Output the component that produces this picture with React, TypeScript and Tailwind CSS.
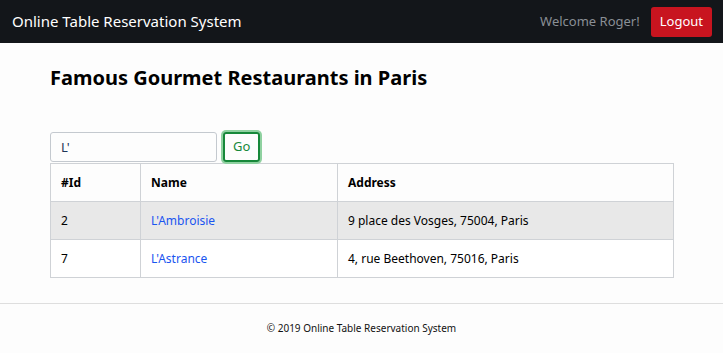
export default function App() {
  const rows = [
    { id: 2, name: "L'Ambroisie", address: "9 place des Vosges, 75004, Paris", shade: true },
    { id: 7, name: "L'Astrance", address: "4, rue Beethoven, 75016, Paris", shade: false },
  ];

  return (
    <div className="min-h-[353px] bg-[#fdfdfd] text-black" style={{ fontFamily: '"Noto Sans", "Open Sans", sans-serif' }}>
      {/* navbar */}
      <nav className="h-[43px] bg-[#13161a] flex items-center justify-between pl-[12px] pr-[11px]">
        <span className="text-white text-[15px]">Online Table Reservation System</span>
        <div className="flex items-center gap-[11px]">
          <span className="text-[#8a8f95] text-[13px]">Welcome Roger!</span>
          <button className="h-[30px] px-[9px] rounded-[3px] bg-[#c8141f] text-white text-[13px]">Logout</button>
        </div>
      </nav>

      <main className="pl-[50px] pr-[49px]">
        <h1 className="mt-[21px] text-[20px] font-bold leading-[28px]">Famous Gourmet Restaurants in Paris</h1>

        {/* search */}
        <div className="mt-[40px] flex items-center gap-[6px]">
          <input
            defaultValue="L'"
            className="w-[167px] h-[30px] border border-[#c4c9cf] rounded-[3px] px-[10px] text-[13px] text-[#1d3557] outline-none"
          />
          <button className="h-[30px] px-[8px] border-2 border-[#17883a] rounded-[3px] text-[#17883a] text-[13px] ring-[2px] ring-[#8fd1a0]">
            Go
          </button>
        </div>

        {/* table */}
        <table className="mt-[1px] w-[624px] border-collapse text-[12px]">
          <thead>
            <tr className="h-[38px]">
              <th className="w-[90px] border border-[#cfd2d6] text-left font-bold pl-[10px]">#Id</th>
              <th className="w-[197px] border border-[#cfd2d6] text-left font-bold pl-[10px]">Name</th>
              <th className="border border-[#cfd2d6] text-left font-bold pl-[10px]">Address</th>
            </tr>
          </thead>
          <tbody>
            {rows.map((r) => (
              <tr key={r.id} className={"h-[38px] " + (r.shade ? "bg-[#e8e8e8]" : "bg-white")}>
                <td className="border border-[#cfd2d6] pl-[10px]">{r.id}</td>
                <td className="border border-[#cfd2d6] pl-[10px]">
                  <a href="#" className="text-[#1a55f0]">{r.name}</a>
                </td>
                <td className="border border-[#cfd2d6] pl-[10px]">{r.address}</td>
              </tr>
            ))}
          </tbody>
        </table>
      </main>

      {/* footer */}
      <footer className="mt-[25px] border-t border-[#dedede] h-[50px] flex items-center justify-center">
        <span className="text-[10px] text-[#111]">© 2019 Online Table Reservation System</span>
      </footer>
    </div>
  );
}
